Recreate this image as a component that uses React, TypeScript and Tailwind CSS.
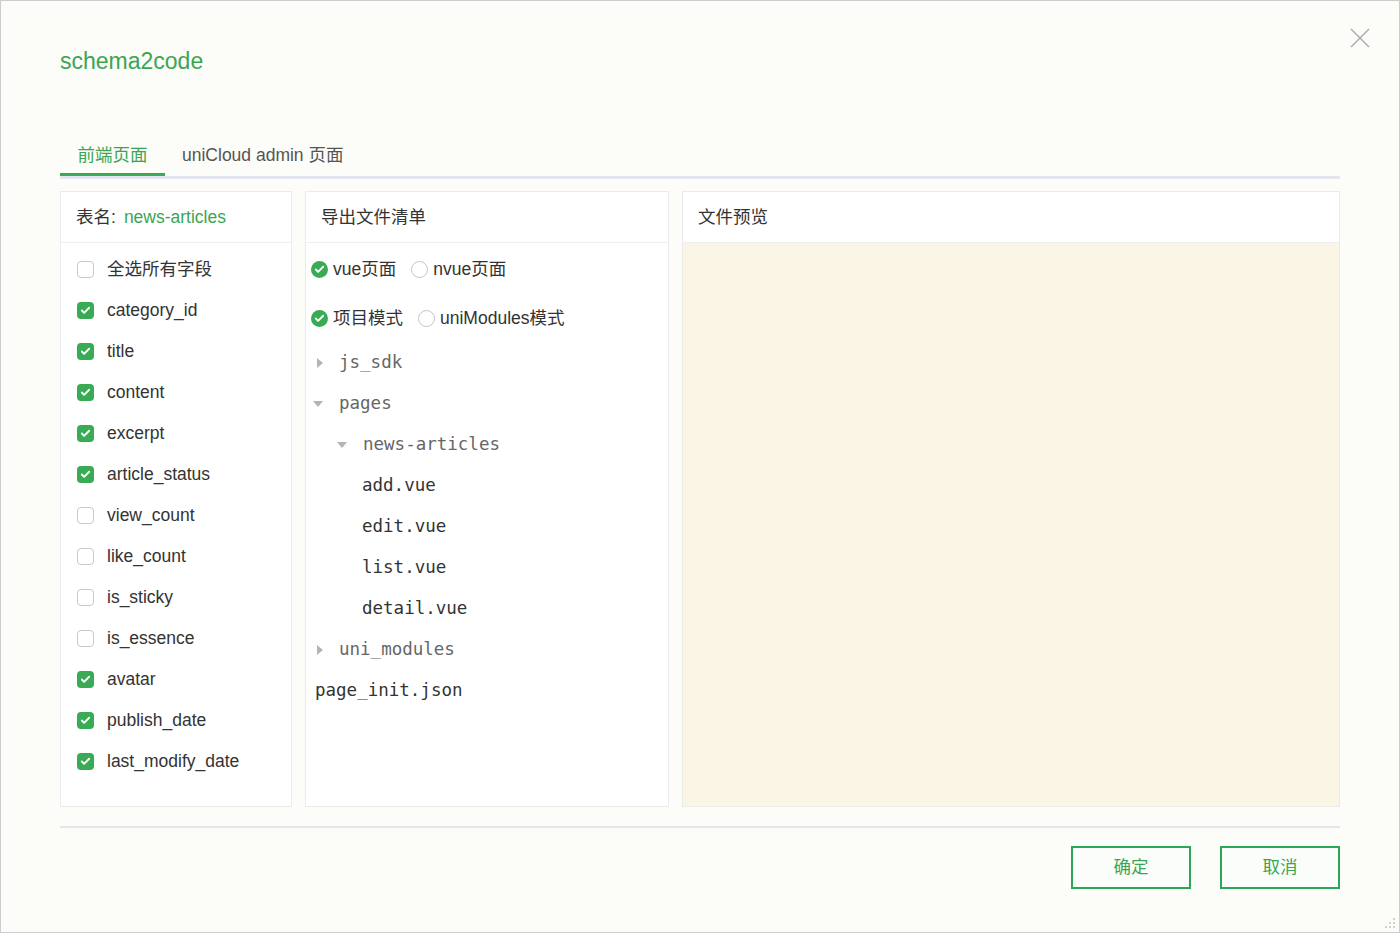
import { Check } from "lucide-react";

// field list of the left panel
const fields: { name: string; checked: boolean }[] = [
  { name: "category_id", checked: true },
  { name: "title", checked: true },
  { name: "content", checked: true },
  { name: "excerpt", checked: true },
  { name: "article_status", checked: true },
  { name: "view_count", checked: false },
  { name: "like_count", checked: false },
  { name: "is_sticky", checked: false },
  { name: "is_essence", checked: false },
  { name: "avatar", checked: true },
  { name: "publish_date", checked: true },
  { name: "last_modify_date", checked: true },
];

const sans = "font-['Liberation_Sans','Noto_Sans_CJK_SC',sans-serif]";
const mono = "font-['DejaVu_Sans_Mono',monospace]";

const Checkbox = ({ checked }: { checked: boolean }) =>
  checked ? (
    <span className="w-[17px] h-[17px] rounded-[4px] bg-[#3aab55] flex items-center justify-center shrink-0">
      <Check className="w-[11px] h-[11px] text-white" strokeWidth={4} />
    </span>
  ) : (
    <span className="w-[17px] h-[17px] rounded-[4px] border border-[#c9c9c9] bg-white shrink-0" />
  );

const Radio = ({ checked }: { checked: boolean }) =>
  checked ? (
    <span className="w-[17px] h-[17px] rounded-full bg-[#3aab55] flex items-center justify-center shrink-0">
      <Check className="w-[11px] h-[11px] text-white" strokeWidth={4} />
    </span>
  ) : (
    <span className="w-[17px] h-[17px] rounded-full border border-[#c4c4c4] bg-white shrink-0" />
  );

const Caret = ({ open }: { open: boolean }) =>
  open ? (
    <svg width="10" height="6" viewBox="0 0 10 6" className="shrink-0">
      <path d="M0 0 L10 0 L5 6 Z" fill="#b4b4b4" />
    </svg>
  ) : (
    <svg width="6" height="10" viewBox="0 0 6 10" className="shrink-0">
      <path d="M0 0 L6 5 L0 10 Z" fill="#b4b4b4" />
    </svg>
  );

const App = () => {
  return (
    <div
      className={`w-[1400px] h-[933px] bg-[#fcfcf8] border border-[#cdcdcd] relative flex flex-col px-[59px] ${sans}`}
    >
      {/* close */}
      <svg
        width="20"
        height="20"
        viewBox="0 0 20 20"
        className="absolute right-[29px] top-[27px]"
      >
        <path d="M1 1 L19 19 M19 1 L1 19" stroke="#a9a9a9" strokeWidth="1.4" />
      </svg>

      <h1 className="mt-[43px] text-[23px] leading-[34px] text-[#3aa653]">
        schema2code
      </h1>

      {/* tabs */}
      <div className="mt-[60px] flex border-b-[3px] border-[#e4e6ee]">
        <div className="px-[17.5px] h-[38px] text-[17.5px] leading-[34px] text-[#3aa653] border-b-[3px] border-[#3aab55] -mb-[3px]">
          前端页面
        </div>
        <div className="px-[17px] h-[38px] text-[17.5px] leading-[34px] text-[#555]">
          uniCloud admin 页面
        </div>
      </div>

      {/* panels */}
      <div className="mt-[12px] flex gap-[13px] h-[616px]">
        <div className="w-[232px] bg-white border border-[#ebebeb] flex flex-col">
          <div className="h-[51px] border-b border-[#eeeeee] px-[15px] flex items-center text-[17.5px] text-[#333]">
            表名:<span className="ml-[8px] text-[#3aa653]">news-articles</span>
          </div>
          <div className="pt-[6px] px-[16px] flex flex-col">
            <label className="h-[41px] flex items-center gap-[13px] text-[17.5px] text-[#333]">
              <Checkbox checked={false} />
              全选所有字段
            </label>
            {fields.map((f) => (
              <label
                key={f.name}
                className="h-[41px] flex items-center gap-[13px] text-[17.5px] text-[#333]"
              >
                <Checkbox checked={f.checked} />
                {f.name}
              </label>
            ))}
          </div>
        </div>

        <div className="w-[364px] bg-white border border-[#ebebeb] flex flex-col">
          <div className="h-[51px] border-b border-[#eeeeee] px-[15px] flex items-center text-[17.5px] text-[#333]">
            导出文件清单
          </div>
          <div className="pt-[2px] pl-[5px] flex flex-col text-[17.5px] text-[#333]">
            <div className="h-[48px] flex items-center">
              <Radio checked />
              <span className="ml-[5px]">vue页面</span>
              <span className="ml-[15px]" />
              <Radio checked={false} />
              <span className="ml-[5px]">nvue页面</span>
            </div>
            <div className="h-[49px] flex items-center pt-[1px]">
              <Radio checked />
              <span className="ml-[5px]">项目模式</span>
              <span className="ml-[15px]" />
              <Radio checked={false} />
              <span className="ml-[5px]">uniModules模式</span>
            </div>
            <div className={`${mono} text-[17.5px] flex flex-col`}>
              <div className="h-[41px] flex items-center text-[#666] pl-[4px]">
                <span className="w-[10px] flex justify-center"><Caret open={false} /></span>
                <span className="ml-[14px]">js_sdk</span>
              </div>
              <div className="h-[41px] flex items-center text-[#666] pl-[2px]">
                <span className="w-[10px] flex justify-center"><Caret open /></span>
                <span className="ml-[16px]">pages</span>
              </div>
              <div className="h-[41px] flex items-center text-[#666] pl-[26px]">
                <span className="w-[10px] flex justify-center"><Caret open /></span>
                <span className="ml-[16px]">news-articles</span>
              </div>
              {["add.vue", "edit.vue", "list.vue", "detail.vue"].map((f) => (
                <div key={f} className="h-[41px] flex items-center text-[#333] pl-[51px]">
                  {f}
                </div>
              ))}
              <div className="h-[41px] flex items-center text-[#666] pl-[4px]">
                <span className="w-[10px] flex justify-center"><Caret open={false} /></span>
                <span className="ml-[14px]">uni_modules</span>
              </div>
              <div className="h-[41px] flex items-center text-[#333] pl-[4px]">
                page_init.json
              </div>
            </div>
          </div>
        </div>

        <div className="flex-1 bg-white border border-[#ebebeb] flex flex-col">
          <div className="h-[51px] border-b border-[#eeeeee] px-[15px] flex items-center text-[17.5px] text-[#333]">
            文件预览
          </div>
          <div className="flex-1 bg-[#fbf5e6]" />
        </div>
      </div>

      {/* footer */}
      <div className="mt-[19px] border-t-2 border-[#e6e6e6]" />
      <div className="mt-[18px] flex justify-end gap-[29px]">
        <button className="w-[120px] h-[43px] border-2 border-[#2ba55a] text-[#3aa653] text-[17.5px] bg-[#fafdf9]">
          确定
        </button>
        <button className="w-[120px] h-[43px] border-2 border-[#2ba55a] text-[#3aa653] text-[17.5px] bg-[#fafdf9]">
          取消
        </button>
      </div>

      {/* resize grip */}
      <svg
        width="12"
        height="12"
        viewBox="0 0 12 12"
        className="absolute right-[3px] bottom-[3px]"
      >
        <rect x="9" y="1" width="2" height="2" fill="#d0d0d0" />
        <rect x="5" y="5" width="2" height="2" fill="#d0d0d0" />
        <rect x="9" y="5" width="2" height="2" fill="#d0d0d0" />
        <rect x="1" y="9" width="2" height="2" fill="#d0d0d0" />
        <rect x="5" y="9" width="2" height="2" fill="#d0d0d0" />
        <rect x="9" y="9" width="2" height="2" fill="#d0d0d0" />
      </svg>
    </div>
  );
};

export default App;
